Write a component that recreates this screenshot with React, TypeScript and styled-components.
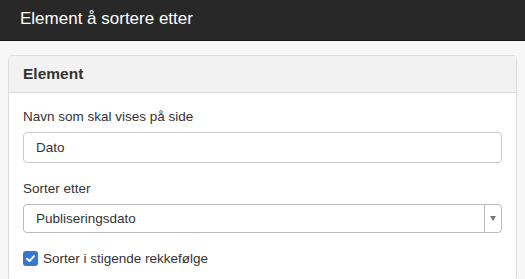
import React from 'react'
import styled, { createGlobalStyle } from 'styled-components'

const GlobalStyle = createGlobalStyle`
  html, body {
    margin: 0;
    padding: 0;
    background: #f7f7f7;
    font-family: "Liberation Sans", Arial, sans-serif;
    color: #333;
  }
  * { box-sizing: border-box; }
`

const Header = styled.header`
  height: 41px;
  background: #282828;
  border-bottom: 1px solid #161616;
  display: flex;
  align-items: center;
  padding: 0 20px 2px;
`

const Title = styled.h1`
  margin: 0;
  font-size: 17px;
  font-weight: normal;
  color: #fff;
`

const Content = styled.main`
  padding: 14px 8px 0;
`

const Panel = styled.section`
  background: #fff;
  border: 1px solid #ddd;
  border-radius: 4px;
  overflow: hidden;
`

const PanelHeading = styled.div`
  height: 37px;
  display: flex;
  align-items: center;
  padding: 0 14px;
  background: #f2f2f2;
  border-bottom: 1px solid #ddd;
  font-size: 15.5px;
  font-weight: bold;
  color: #333;
`

const PanelBody = styled.div`
  padding: 14px 14px 14px;
  display: flex;
  flex-direction: column;
`

const Field = styled.div`
  display: flex;
  flex-direction: column;
  margin-bottom: 16px;
`

const Label = styled.label`
  font-size: 13.5px;
  line-height: 20px;
  margin-bottom: 5px;
  color: #333;
`

const Input = styled.input`
  height: 31px;
  border: 1px solid #ccc;
  border-radius: 4px;
  padding: 0 9px 0 12px;
  font: inherit;
  font-size: 13.5px;
  color: #333;
  outline: none;
`

const SelectBox = styled.div`
  height: 29px;
  border: 1px solid #bbb;
  border-radius: 4px;
  display: flex;
  align-items: center;
  font-size: 13.5px;
  color: #333;
`

const SelectValue = styled.span`
  flex: 1;
  padding: 0 9px 0 12px;
`

const SelectArrow = styled.span`
  width: 17px;
  height: 100%;
  border-left: 1px solid #bbb;
  display: flex;
  align-items: center;
  justify-content: center;

  &::after {
    content: '';
    border-left: 3.5px solid transparent;
    border-right: 3.5px solid transparent;
    border-top: 5px solid #777;
  }
`

const CheckRow = styled.label`
  display: flex;
  align-items: center;
  gap: 5px;
  font-size: 13.5px;
  margin-top: 2px;
`

const CheckBox = styled.span`
  width: 15px;
  height: 15px;
  border-radius: 3px;
  background: #3478d4;
  display: flex;
  align-items: center;
  justify-content: center;
`

export default function App() {
  return (
    <>
      <GlobalStyle />
      <Header>
        <Title>Element å sortere etter</Title>
      </Header>
      <Content>
        <Panel>
          <PanelHeading>Element</PanelHeading>
          <PanelBody>
            <Field>
              <Label>Navn som skal vises på side</Label>
              <Input defaultValue="Dato" />
            </Field>
            <Field>
              <Label>Sorter etter</Label>
              <SelectBox>
                <SelectValue>Publiseringsdato</SelectValue>
                <SelectArrow />
              </SelectBox>
            </Field>
            <CheckRow>
              <CheckBox>
                <svg width="11" height="11" viewBox="0 0 12 12">
                  <path d="M2.2 6.3 L4.9 8.8 L9.8 3.4" fill="none" stroke="#fff" strokeWidth="2.2" strokeLinecap="round" strokeLinejoin="round" />
                </svg>
              </CheckBox>
              Sorter i stigende rekkefølge
            </CheckRow>
          </PanelBody>
        </Panel>
      </Content>
    </>
  )
}
